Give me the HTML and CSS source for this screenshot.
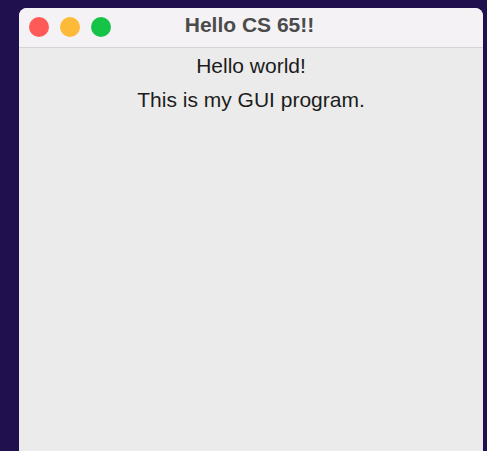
FILE: index.html
```html
<!DOCTYPE html>
<html lang="en">
<head>
<meta charset="utf-8">
<title>Hello CS 65!!</title>
<link rel="stylesheet" href="styles.css">
</head>
<body>
  <div class="window">
    <div class="titlebar">
      <div class="lights">
        <span class="light close"></span>
        <span class="light minimize"></span>
        <span class="light zoom"></span>
      </div>
      <div class="title">Hello CS 65!!</div>
    </div>
    <div class="content">
      <div class="label">Hello world!</div>
      <div class="label">This is my GUI program.</div>
    </div>
  </div>
</body>
</html>
```

FILE: styles.css
```css
html, body {
  height: 100%;
}

body {
  margin: 0;
  background: #20104e;
  padding: 8px 4px 0 19px;
  box-sizing: border-box;
  font-family: "Liberation Sans", Arial, sans-serif;
  overflow: hidden;
}

.window {
  height: 100%;
  display: flex;
  flex-direction: column;
  border-radius: 8px 8px 0 0;
  overflow: hidden;
  background: #ebebeb;
}

.titlebar {
  position: relative;
  height: 40px;
  flex: none;
  display: flex;
  justify-content: center;
  align-items: flex-start;
  padding-top: 5px;
  box-sizing: border-box;
  background: #f4f2f4;
  border-bottom: 1px solid #d4d4d4;
}

.lights {
  position: absolute;
  left: 10px;
  top: 9px;
  display: flex;
  gap: 11px;
}

.light {
  width: 20px;
  height: 20px;
  border-radius: 50%;
}

.close { background: #fe5a57; }
.minimize { background: #fdb938; }
.zoom { background: #15c447; }

.title {
  font-size: 21px;
  line-height: 24px;
  font-weight: bold;
  color: #4b4b4b;
  margin-left: -3px;
}

.content {
  flex: 1;
  padding-top: 1px;
  display: flex;
  flex-direction: column;
  align-items: center;
}

.label {
  font-size: 21px;
  line-height: 34px;
  color: #1c1c1c;
}
```
